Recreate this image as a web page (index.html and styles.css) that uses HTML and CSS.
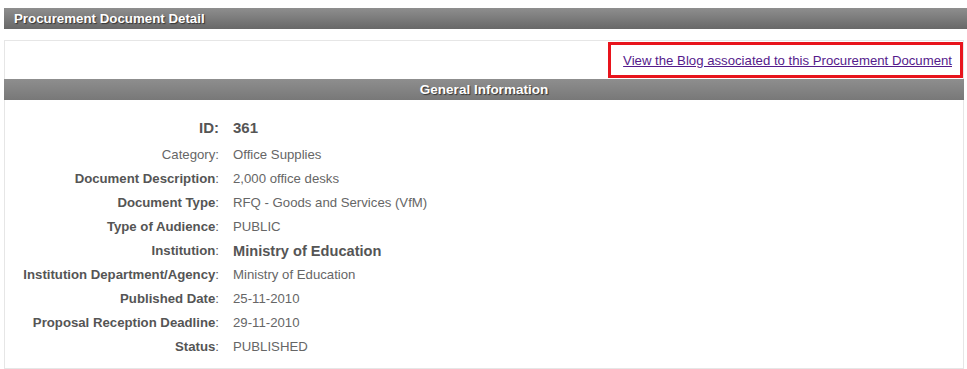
FILE: index.html
```html
<!DOCTYPE html>
<html lang="en">
<head>
  <meta charset="UTF-8" />
  <meta name="viewport" content="width=device-width, initial-scale=1.0"/>
  <title>Procurement Document Detail</title>
  <link rel="stylesheet" href="styles.css">
</head>
<body>

  <div class="page-title">Procurement Document Detail</div>

  <div class="detail-panel">
    <div class="blog-row">
      <div class="blog-box">
        <a href="#">View the Blog associated to this Procurement Document</a>
      </div>
    </div>

    <div class="section-title">General Information</div>

    <dl class="info-grid">
      <dt class="big">ID:</dt>
      <dd class="big">361</dd>

      <dt class="plain">Category:</dt>
      <dd>Office Supplies</dd>

      <dt><b>Document Description</b>:</dt>
      <dd>2,000 office desks</dd>

      <dt><b>Document Type</b>:</dt>
      <dd>RFQ - Goods and Services (VfM)</dd>

      <dt><b>Type of Audience</b>:</dt>
      <dd>PUBLIC</dd>

      <dt><b>Institution</b>:</dt>
      <dd class="strong">Ministry of Education</dd>

      <dt><b>Institution Department/Agency</b>:</dt>
      <dd>Ministry of Education</dd>

      <dt><b>Published Date</b>:</dt>
      <dd>25-11-2010</dd>

      <dt><b>Proposal Reception Deadline</b>:</dt>
      <dd>29-11-2010</dd>

      <dt><b>Status</b>:</dt>
      <dd>PUBLISHED</dd>
    </dl>
  </div>

</body>
</html>
```

FILE: styles.css
```css
body {
  margin: 8px 0 0 4px;
  font-family: "Liberation Sans", Arial, sans-serif;
  font-size: 13.2px;
  color: #555;
  background-color: #fff;
}

.page-title {
  height: 21px;
  line-height: 21px;
  padding-left: 10px;
  background: linear-gradient(#8e8e8e, #686868);
  color: #fff;
  font-weight: bold;
  font-size: 13.3px;
  text-shadow: 1px 1px 1px #333;
}

.detail-panel {
  margin: 11px 3px 0 0;
  border: 1px solid #e6e6e6;
  padding-bottom: 9px;
}

.blog-row {
  display: flex;
  justify-content: flex-end;
  padding: 1px 0 1px;
}

.blog-box {
  border: 3px solid #e8141c;
  padding: 0 8px 0 12px;
  height: 30px;
  display: flex;
  align-items: center;
}

.blog-box a {
  color: #551a8b;
  font-size: 13.2px;
}

.section-title {
  margin-left: -1px;
  margin-right: -1px;
  height: 21px;
  line-height: 21px;
  background: linear-gradient(#8e8e8e, #787878);
  color: #fff;
  font-weight: bold;
  font-size: 13.5px;
  text-align: center;
  text-shadow: 1px 1px 1px #333;
}

.info-grid {
  display: grid;
  grid-template-columns: 214px 1fr;
  column-gap: 14px;
  margin: 13px 0 0;
}

.info-grid dt,
.info-grid dd {
  margin: 0;
  line-height: 24px;
}

.info-grid dt {
  text-align: right;
  color: #555;
}

.info-grid dd {
  color: #666;
}

.info-grid .big {
  font-size: 15px;
  font-weight: bold;
  line-height: 30px;
  color: #555;
}

.info-grid dd.strong {
  font-size: 14.6px;
  font-weight: bold;
  color: #555;
}

.info-grid dt.plain {
  color: #666;
}
```
